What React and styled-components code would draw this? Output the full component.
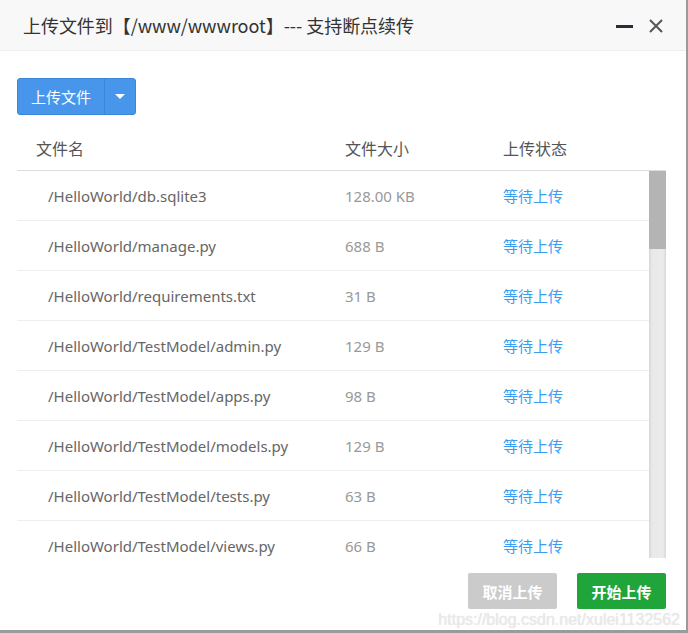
import React from 'react'
import styled, { createGlobalStyle } from 'styled-components'

const GlobalStyle = createGlobalStyle`
    html, body {
        margin: 0;
        padding: 0;
        background: #fff;
    }
    body {
        font-family: "Noto Sans", "Noto Sans CJK SC", sans-serif;
    }
`

const files = [
    ['/HelloWorld/db.sqlite3', '128.00 KB'],
    ['/HelloWorld/manage.py', '688 B'],
    ['/HelloWorld/requirements.txt', '31 B'],
    ['/HelloWorld/TestModel/admin.py', '129 B'],
    ['/HelloWorld/TestModel/apps.py', '98 B'],
    ['/HelloWorld/TestModel/models.py', '129 B'],
    ['/HelloWorld/TestModel/tests.py', '63 B'],
    ['/HelloWorld/TestModel/views.py', '66 B'],
]

export default function App() {
    return (
        <>
            <GlobalStyle />
            <Dialog>
                <Header>
                    <Title>上传文件到【/www/wwwroot】--- 支持断点续传</Title>
                    <HeaderIcons>
                        <MinBar />
                        <CloseIcon width="16" height="16" viewBox="0 0 16 16">
                            <path d="M2 2 L14 14 M14 2 L2 14" stroke="#555" strokeWidth="2" fill="none" />
                        </CloseIcon>
                    </HeaderIcons>
                </Header>

                <Body>
                    <SplitButton>
                        <UploadMain>上传文件</UploadMain>
                        <UploadCaret>
                            <svg width="10" height="6" viewBox="0 0 10 6">
                                <path d="M0 0 L10 0 L5 5 Z" fill="#fff" />
                            </svg>
                        </UploadCaret>
                    </SplitButton>

                    <TableHead>
                        <HeadCell $w={309}>文件名</HeadCell>
                        <HeadCell $w={158}>文件大小</HeadCell>
                        <HeadCell>上传状态</HeadCell>
                    </TableHead>

                    <ListArea>
                        <List>
                            {files.map(([name, size]) => (
                                <Row key={name}>
                                    <NameCell>{name}</NameCell>
                                    <SizeCell>{size}</SizeCell>
                                    <StatusCell>等待上传</StatusCell>
                                </Row>
                            ))}
                        </List>
                        <ScrollTrack>
                            <ScrollThumb />
                        </ScrollTrack>
                    </ListArea>

                    <Footer>
                        <ActionButton $bg="#cbcbcb">取消上传</ActionButton>
                        <ActionButton $bg="#20a53a">开始上传</ActionButton>
                    </Footer>
                </Body>

                <Watermark>https://blog.csdn.net/xulei1132562</Watermark>
            </Dialog>
        </>
    )
}

const Dialog = styled.div`
    position: relative;
    box-sizing: border-box;
    width: 688px;
    height: 633px;
    background: #fff;
    border-right: 2px solid #9a9a9a;
    border-bottom: 3px solid #9a9a9a;
    display: flex;
    flex-direction: column;
    overflow: hidden;
`

const Header = styled.div`
    height: 50px;
    flex-shrink: 0;
    background: #f8f8f8;
    border-bottom: 1px solid #eee;
    display: flex;
    align-items: center;
    padding: 0 22px 0 23px;
`

const Title = styled.div`
    font-size: 18px;
    color: #333;
    font-family: "Noto Sans CJK SC", sans-serif;
    letter-spacing: -0.05px;
`

const HeaderIcons = styled.div`
    margin-left: auto;
    display: flex;
    align-items: center;
    gap: 15px;
`

const MinBar = styled.span`
    display: block;
    width: 17px;
    height: 3px;
    margin-top: 2px;
    background: #2b2b3a;
`

const CloseIcon = styled.svg`
    display: block;
    margin-top: 1px;
`

const Body = styled.div`
    flex: 1;
    display: flex;
    flex-direction: column;
    padding: 27px 20px 0 17px;
`

const SplitButton = styled.div`
    display: flex;
    align-self: flex-start;
    height: 37px;
    box-sizing: border-box;
    border: 1px solid #3a87d8;
    border-radius: 3px;
    background: #4896ec;
    overflow: hidden;
`

const UploadMain = styled.div`
    width: 86px;
    display: flex;
    align-items: center;
    justify-content: center;
    color: #fff;
    font-size: 15px;
    font-family: "Noto Sans CJK SC", sans-serif;
    border-right: 1px solid #3a87d8;
`

const UploadCaret = styled.div`
    width: 30px;
    display: flex;
    align-items: center;
    justify-content: center;
    svg { display: block; }
`

const TableHead = styled.div`
    margin-top: 11px;
    height: 44px;
    display: flex;
    align-items: center;
    padding-left: 19px;
    border-bottom: 1px solid #ddd;
`

const HeadCell = styled.div`
    width: ${p => (p.$w ? p.$w + 'px' : 'auto')};
    flex-shrink: 0;
    font-size: 16px;
    color: #555;
    font-family: "Noto Sans CJK SC", sans-serif;
`

const ListArea = styled.div`
    height: 387px;
    display: flex;
`

const List = styled.div`
    flex: 1;
    overflow: hidden;
`

const ScrollTrack = styled.div`
    width: 17px;
    flex-shrink: 0;
    background: linear-gradient(to right, #d6d6d6 0, #e9e9e9 3px, #ebebeb 14px, #d8d8d8 17px);
`

const ScrollThumb = styled.div`
    height: 78px;
    background: #b4b4b4;
`

const Row = styled.div`
    height: 50px;
    box-sizing: border-box;
    display: flex;
    align-items: center;
    padding-left: 31px;
    border-bottom: 1px solid #eee;
    font-size: 15px;
`

const NameCell = styled.div`
    width: 297px;
    flex-shrink: 0;
    color: #666;
    white-space: nowrap;
`

const SizeCell = styled.div`
    width: 158px;
    flex-shrink: 0;
    color: #999;
`

const StatusCell = styled.div`
    color: #3a9cf2;
    font-family: "Noto Sans CJK SC", sans-serif;
`

const Footer = styled.div`
    display: flex;
    justify-content: flex-end;
    gap: 20px;
    margin-top: 15px;
`

const ActionButton = styled.div`
    width: 89px;
    height: 36px;
    border-radius: 2px;
    background: ${p => p.$bg};
    color: #fff;
    font-weight: bold;
    font-size: 15px;
    font-family: "Noto Sans CJK SC", sans-serif;
    display: flex;
    align-items: center;
    justify-content: center;
`

const Watermark = styled.div`
    position: absolute;
    right: 6px;
    bottom: 1px;
    font-family: "Liberation Sans", Arial, sans-serif;
    font-size: 16px;
    color: rgba(235, 235, 235, 0.85);
    text-shadow: 0 0 1px rgba(150, 150, 150, 0.35);
    pointer-events: none;
`
